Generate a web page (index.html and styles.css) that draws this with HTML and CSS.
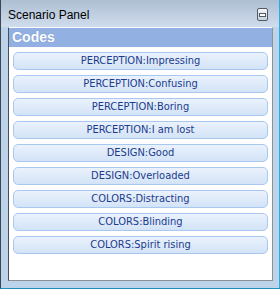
FILE: index.html
```html
<!DOCTYPE html>
<html lang="en">
<head>
  <meta charset="UTF-8" />
  <title>Scenario Panel</title>
  <link rel="stylesheet" href="styles.css">
</head>
<body>
  <div class="window">
    <div class="titlebar">
      <span class="title">Scenario Panel</span>
      <span class="restore"><span class="restore-bar"></span></span>
    </div>

    <div class="panel">
      <div class="panel-head">Codes</div>
      <div class="code-list">
        <button class="code">PERCEPTION:Impressing</button>
        <button class="code">PERCEPTION:Confusing</button>
        <button class="code">PERCEPTION:Boring</button>
        <button class="code">PERCEPTION:I am lost</button>
        <button class="code">DESIGN:Good</button>
        <button class="code">DESIGN:Overloaded</button>
        <button class="code">COLORS:Distracting</button>
        <button class="code">COLORS:Blinding</button>
        <button class="code">COLORS:Spirit rising</button>
      </div>
    </div>
  </div>
</body>
</html>
```

FILE: styles.css
```css
body {
  margin: 0;
  font-family: 'Liberation Sans', Arial, sans-serif;
}

.window {
  width: 280px;
  height: 289px;
  box-sizing: border-box;
  display: flex;
  flex-direction: column;
  background: #bdd3ea;
  border-left: 1px solid #3c4650;
  border-right: 1px solid #22b0e6;
  border-bottom: 1px solid #1f8fb8;
  padding: 0 6px 7px 7px;
}

.titlebar {
  height: 27px;
  margin: 0 -6px 0 -7px;
  padding: 0 11px 0 7px;
  display: flex;
  align-items: center;
  justify-content: space-between;
  background: linear-gradient(#aebfd3, #cfdcec);
}

.title {
  font-size: 12px;
  color: #000;
  padding-top: 2px;
}

.restore {
  width: 9px;
  height: 11px;
  border: 1px solid #505a68;
  border-radius: 2px;
  background: linear-gradient(#f4f6f9, #c9d1dc);
  display: flex;
  align-items: center;
  justify-content: center;
  margin-top: 2px;
}

.restore-bar {
  width: 5px;
  height: 2px;
  border: 1px solid #505a68;
  background: #fff;
}

.panel {
  flex: 1;
  background: #fff;
  border: 1px solid #8d9196;
  border-top-color: #fff;
  border-left-color: #4b4f55;
}

.panel-head {
  height: 19px;
  line-height: 19px;
  padding-left: 3px;
  background: #93b0e3;
  color: #fff;
  font-weight: bold;
  font-size: 14px;
  text-shadow: 0 0 1px #6d89bd;
}

.code-list {
  display: flex;
  flex-direction: column;
  gap: 5px;
  padding: 5px 4px 0 4px;
}

.code {
  height: 18px;
  padding: 0;
  border: 1px solid #a8c8ef;
  border-radius: 5px;
  background: linear-gradient(#eaf2fc, #d3e3f7);
  color: #1b3b8c;
  font-family: 'DejaVu Sans Condensed', 'DejaVu Sans', sans-serif;
  font-stretch: condensed;
  font-size: 11px;
  line-height: 16px;
  text-align: center;
}
```
